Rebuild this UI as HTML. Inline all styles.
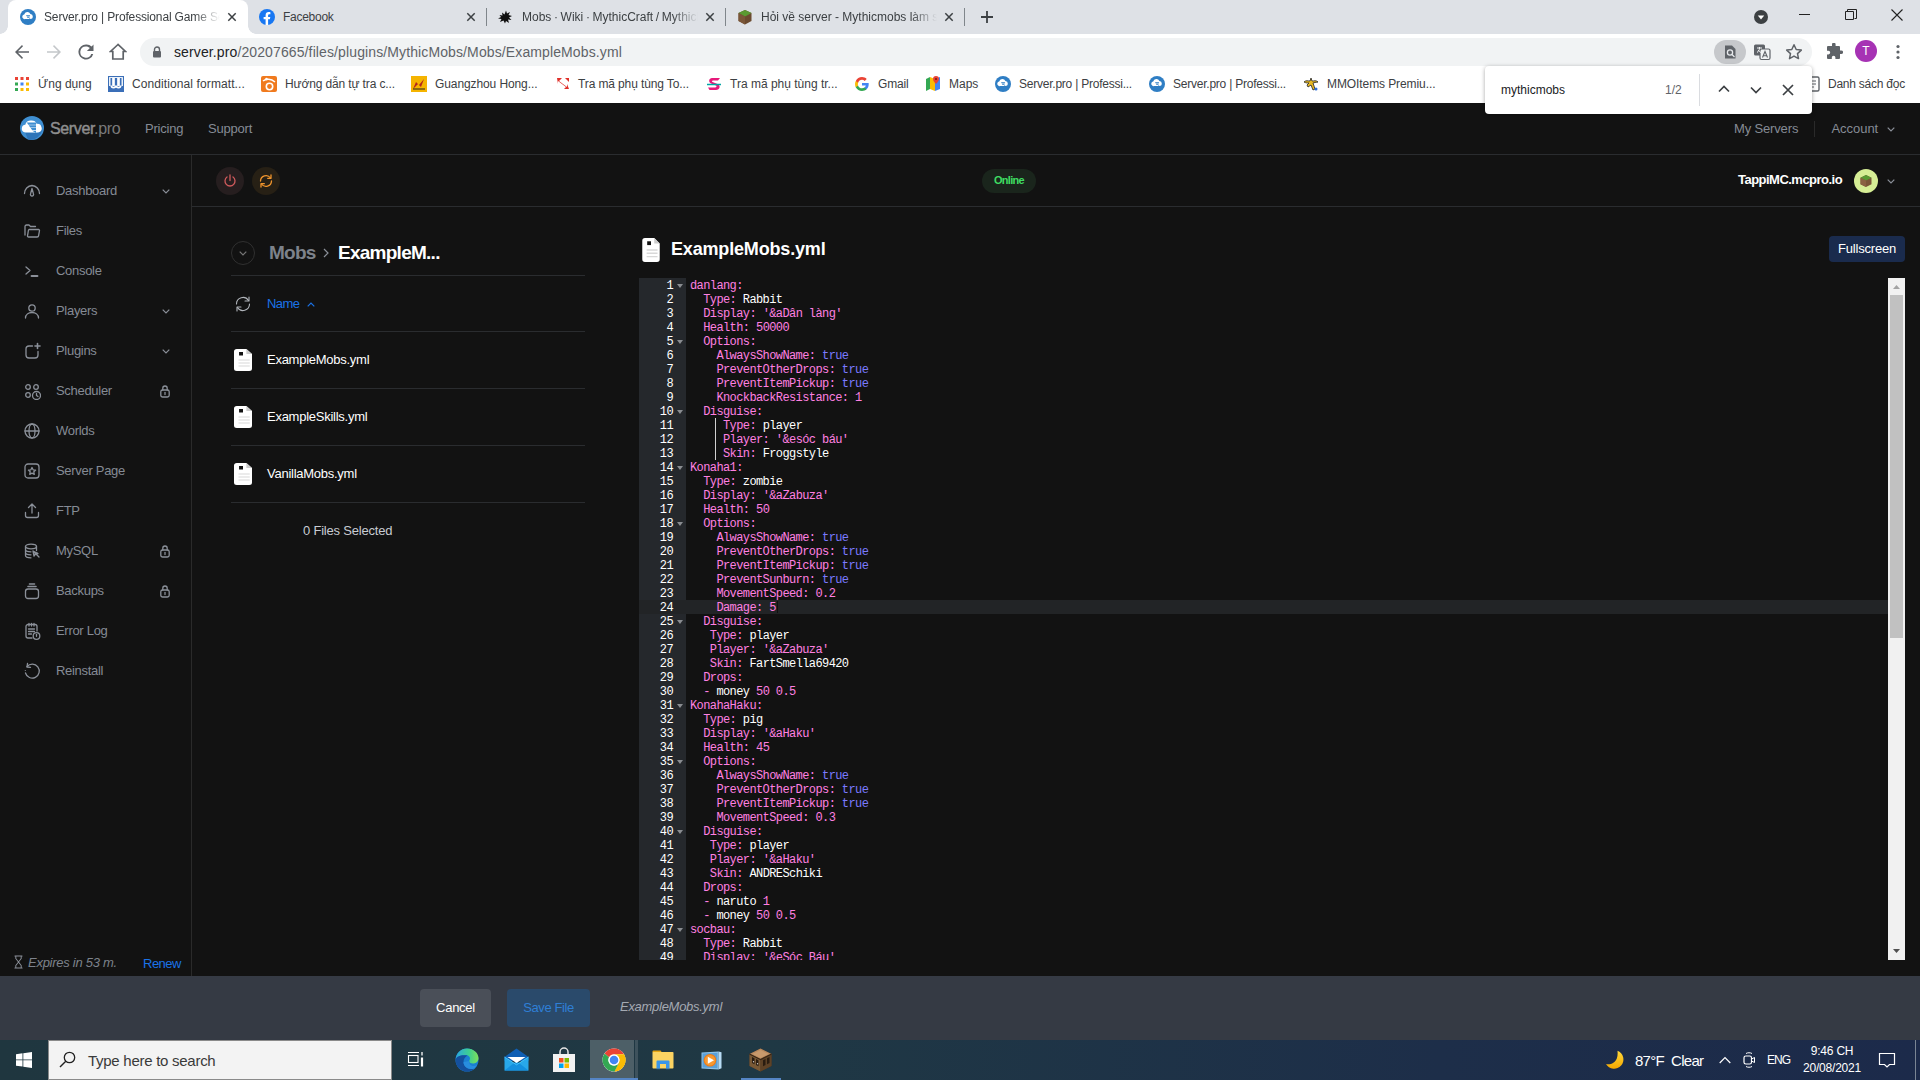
<!DOCTYPE html>
<html><head><meta charset="utf-8">
<style>
*{box-sizing:border-box;margin:0;padding:0}
html,body{width:1920px;height:1080px;overflow:hidden;background:#121212;font-family:"Liberation Sans",sans-serif;}
.abs{position:absolute}
#tabstrip{position:absolute;left:0;top:0;width:1920px;height:34px;background:#dee1e6}
#toolbar{position:absolute;left:0;top:34px;width:1920px;height:34px;background:#fff}
#bookmarks{position:absolute;left:0;top:68px;width:1920px;height:35px;background:#fff}
.tabtxt{position:absolute;top:9px;font-size:12px;color:#3c4043;white-space:nowrap;overflow:hidden;height:16px;line-height:16px}
.bm{position:absolute;top:76px;font-size:12px;color:#3c4043;white-space:nowrap;line-height:16px}
#page{position:absolute;left:0;top:103px;width:1920px;height:873px;background:#121212}
.nav{position:absolute;letter-spacing:-.2px;font-size:13px;color:#858b95;white-space:nowrap;line-height:16px}
.side{position:absolute;left:56px;margin-top:1px;letter-spacing:-.3px;font-size:13px;color:#858b95;white-space:nowrap;line-height:16px}
.hl{position:absolute;height:1px;background:#2a2c2f}
.fname{position:absolute;left:267px;letter-spacing:-.26px;font-size:13px;color:#fff;white-space:nowrap;line-height:16px}
#bottombar{position:absolute;left:0;top:976px;width:1920px;height:64px;background:#353a44}
#taskbar{position:absolute;left:0;top:1040px;width:1920px;height:40px;background:linear-gradient(90deg,#1f363f 0%,#1f3844 40%,#1d2e49 75%,#1c2a4a 100%)}
/* editor */
#editor{position:absolute;left:639px;top:278px;width:1249px;height:682px;background:#121212;overflow:hidden}
#gutter{position:absolute;left:0;top:0;width:47px;height:682px;background:#25282c}
.ln{position:absolute;left:0;width:1249px;height:14px;font-family:"Liberation Mono",monospace;font-size:12px;letter-spacing:-0.6px;line-height:14px;white-space:pre;color:#fff;margin-top:1px}
.ln .n{position:absolute;left:0;width:34px;text-align:right;color:#fff}
.ln .c{position:absolute;left:51px}
.k{color:#ff80e1}.b{color:#7a7aff}.w{color:#fff}
</style></head><body>
<!--CHROME-->
<div id="tabstrip">
<div class="abs" style="left:8px;top:0;width:240px;height:34px;background:#fff;border-radius:8px 8px 0 0"></div>
<div class="abs" style="left:0;top:26px;width:8px;height:8px;background:radial-gradient(circle at 0 0,#dee1e6 7.5px,#fff 8px)"></div>
<div class="abs" style="left:248px;top:26px;width:8px;height:8px;background:radial-gradient(circle at 100% 0,#dee1e6 7.5px,#fff 8px)"></div>
<!-- tab1 favicon -->
<svg class="abs" style="left:20px;top:9px" width="16" height="16" viewBox="0 0 16 16"><circle cx="8" cy="8" r="8" fill="#2f7ec4"/><path d="M3.2 9.6a2.2 2.2 0 0 1 1-4 3.3 3.3 0 0 1 6.2-.6 2.6 2.6 0 0 1 2.4 2.6 2.5 2.5 0 0 1-2.5 2.5H5a2 2 0 0 1-1.8-.5z" fill="#fff"/><path d="M6 6.2h4.2l-.5 1H6.6zm.8 1.5h3l-.5 1H7.4zm2.3 1.6l.9-.4.2 1.3z" fill="#2f7ec4"/></svg>
<div class="tabtxt" style="left:44px;width:176px;-webkit-mask-image:linear-gradient(90deg,#000 150px,transparent 176px);letter-spacing:-.15px">Server.pro | Professional Game Server</div>
<svg class="abs" style="left:227px;top:12px" width="10" height="10" viewBox="0 0 10 10"><path d="M1.3 1.3l7.4 7.4M8.7 1.3L1.3 8.7" stroke="#3c4043" stroke-width="1.5"/></svg>
<!-- tab2 -->
<svg class="abs" style="left:259px;top:9px" width="16" height="16" viewBox="0 0 16 16"><circle cx="8" cy="8" r="8" fill="#1877f2"/><path d="M10.9 10.3l.4-2.3H9.1V6.5c0-.6.3-1.2 1.3-1.2h1V3.3s-.9-.2-1.8-.2c-1.800 0-3 1.100-3 3.100V8H4.600v2.300h2V16h2.500v-5.700z" fill="#fff"/></svg>
<div class="tabtxt" style="left:283px;width:170px;letter-spacing:-.27px">Facebook</div>
<svg class="abs" style="left:466px;top:12px" width="10" height="10" viewBox="0 0 10 10"><path d="M1.3 1.3l7.4 7.4M8.7 1.3L1.3 8.7" stroke="#3c4043" stroke-width="1.5"/></svg>
<div class="abs" style="left:486px;top:8px;width:1px;height:18px;background:#80868b"></div>
<!-- tab3 -->
<svg class="abs" style="left:497px;top:9px" width="16" height="16" viewBox="0 0 16 16"><path d="M1 9.500l3-1.500L2.500 6l3 .5L5 3.500l2.500 2L9 1.500l1 3 3-1.500-1.500 3 3.500 1-3 1.500 2.500 2.500-3.500-.5 1 3.500-3-2-1 2.500-1.500-3-3.500 1.500 1.500-3z" fill="#111"/></svg>
<div class="tabtxt" style="left:522px;width:176px;-webkit-mask-image:linear-gradient(90deg,#000 150px,transparent 176px);letter-spacing:0;word-spacing:-.7px">Mobs · Wiki · MythicCraft / MythicMobs</div>
<svg class="abs" style="left:705px;top:12px" width="10" height="10" viewBox="0 0 10 10"><path d="M1.3 1.3l7.4 7.4M8.7 1.3L1.3 8.7" stroke="#3c4043" stroke-width="1.5"/></svg>
<div class="abs" style="left:725px;top:8px;width:1px;height:18px;background:#80868b"></div>
<!-- tab4 -->
<svg class="abs" style="left:737px;top:9px" width="16" height="16" viewBox="0 0 16 16"><path d="M8 1l6.500 3v8L8 15.500 1.500 12V4z" fill="#6b4a2f"/><path d="M8 1l6.500 3L8 7.500 1.500 4z" fill="#5a9a32"/><path d="M8 7.500V15.500L1.500 12V4z" fill="#7a5638"/></svg>
<div class="tabtxt" style="left:761px;width:176px;-webkit-mask-image:linear-gradient(90deg,#000 150px,transparent 176px)">Hỏi về server - Mythicmobs làm sao</div>
<svg class="abs" style="left:944px;top:12px" width="10" height="10" viewBox="0 0 10 10"><path d="M1.3 1.3l7.4 7.4M8.7 1.3L1.300 8.700" stroke="#3c4043" stroke-width="1.5"/></svg>
<div class="abs" style="left:964px;top:8px;width:1px;height:18px;background:#80868b"></div>
<svg class="abs" style="left:980px;top:10px" width="14" height="14" viewBox="0 0 14 14"><path d="M7 1v12M1 7h12" stroke="#3c4043" stroke-width="1.800"/></svg>
<!-- window controls -->
<svg class="abs" style="left:1754px;top:10px" width="14" height="14" viewBox="0 0 14 14"><circle cx="7" cy="7" r="7" fill="#3c4043"/><path d="M3.800 5.500h6.400L7 9.500z" fill="#fff"/></svg>
<div class="abs" style="left:1799px;top:14px;width:11px;height:1px;background:#222"></div>
<svg class="abs" style="left:1845px;top:9px" width="12" height="12" viewBox="0 0 12 12"><path d="M.5 2.500h8v8h-8zM2.500 2.500v-2h9v9h-2" fill="none" stroke="#222" stroke-width="1"/></svg>
<svg class="abs" style="left:1891px;top:9px" width="12" height="12" viewBox="0 0 12 12"><path d="M.5.5l11 11M11.500.5l-11 11" stroke="#222" stroke-width="1.100"/></svg>
</div>
<div id="toolbar">
<svg class="abs" style="left:14px;top:10px" width="16" height="16" viewBox="0 0 16 16"><path d="M15 7.200H4l5-5L8 1 1 8l7 7 1-1.200-5-5h11z" fill="#5f6368"/></svg>
<svg class="abs" style="left:46px;top:10px" width="16" height="16" viewBox="0 0 16 16"><path d="M1 7.200h11l-5-5L8 1l7 7-7 7-1-1.200 5-5H1z" fill="#c4c7ca"/></svg>
<svg class="abs" style="left:78px;top:10px" width="16" height="16" viewBox="0 0 16 16"><path d="M13.600 2.400A7.500 7.500 0 0 0 8 .5a7.500 7.500 0 1 0 7.200 9.400h-2A5.600 5.600 0 1 1 8 2.400c1.500 0 2.900.7 3.900 1.700L8.900 7h6.600V.5z" fill="#5f6368"/></svg>
<svg class="abs" style="left:109px;top:9px" width="18" height="17" viewBox="0 0 18 17"><path d="M9 1.500L1.500 8.500h2.300V16h10.400V8.500h2.300z" fill="none" stroke="#5f6368" stroke-width="1.700" stroke-linejoin="miter"/></svg>
<div class="abs" style="left:140px;top:4px;width:1672px;height:28px;border-radius:14px;background:#f1f3f4"></div>
<svg class="abs" style="left:152px;top:12px" width="10" height="12" viewBox="0 0 10 12"><path d="M2.500 5V3.500a2.500 2.500 0 0 1 5 0V5" fill="none" stroke="#5f6368" stroke-width="1.400"/><rect x="1" y="5" width="8" height="6.500" rx="1" fill="#5f6368"/></svg>
<div class="abs" style="left:174px;top:9px;font-size:14px;line-height:18px;color:#5f6368;white-space:nowrap;letter-spacing:.115px"><span style="color:#202124">server.pro</span>/20207665/files/plugins/MythicMobs/Mobs/ExampleMobs.yml</div>
<div class="abs" style="left:1714px;top:6px;width:32px;height:24px;border-radius:12px;background:#c6c8cb"></div>
<svg class="abs" style="left:1722px;top:10px" width="16" height="16" viewBox="0 0 16 16"><path d="M3 1.500h7l3.500 3.500v9.500H3z" fill="#5f6368"/><circle cx="8" cy="8.500" r="2.600" fill="none" stroke="#e8eaed" stroke-width="1.300"/><path d="M10 10.500l2.500 2.500" stroke="#e8eaed" stroke-width="1.300"/></svg>
<svg class="abs" style="left:1753px;top:9px" width="18" height="18" viewBox="0 0 18 18"><rect x="1" y="1.500" width="11" height="11" rx="1.500" fill="#5f6368"/><rect x="7" y="6" width="10" height="10.500" rx="1.500" fill="#f1f3f4" stroke="#5f6368" stroke-width="1.200"/><path d="M4 5h5M6.500 4v1c0 2-1 3.500-2.500 4.500M5 7c.800 1.200 1.800 2 3 2.500" stroke="#f1f3f4" stroke-width="1" fill="none"/><path d="M9.500 14.500l2.500-6 2.500 6M10.300 12.800h3.400" stroke="#5f6368" stroke-width="1.100" fill="none"/></svg>
<svg class="abs" style="left:1785px;top:9px" width="18" height="18" viewBox="0 0 18 18"><path d="M9 1.800l2.200 4.700 5.100.6-3.800 3.500 1 5L9 13.100l-4.500 2.500 1-5L1.700 7.100l5.100-.6z" fill="none" stroke="#5f6368" stroke-width="1.500" stroke-linejoin="round"/></svg>
<svg class="abs" style="left:1825px;top:9px" width="18" height="18" viewBox="0 0 18 18"><path d="M7 1.500a1.800 1.800 0 0 1 3.600 0V3H14a1 1 0 0 1 1 1v3.400h1.300a1.800 1.800 0 0 1 0 3.600H15v4a1 1 0 0 1-1 1h-3.600v-1.400a1.800 1.800 0 0 0-3.600 0V16H3a1 1 0 0 1-1-1v-3.600h1.400a1.800 1.800 0 0 0 0-3.600H2V4a1 1 0 0 1 1-1h4z" fill="#5f6368"/></svg>
<div class="abs" style="left:1855px;top:6px;width:22px;height:22px;border-radius:11px;background:#a632b4;color:#fff;font-size:12px;line-height:22px;text-align:center">T</div>
<svg class="abs" style="left:1896px;top:10px" width="4" height="16" viewBox="0 0 4 16"><circle cx="2" cy="2.500" r="1.600" fill="#5f6368"/><circle cx="2" cy="8" r="1.600" fill="#5f6368"/><circle cx="2" cy="13.500" r="1.600" fill="#5f6368"/></svg>
</div>
<div id="bookmarks">
<svg class="abs" style="left:15px;top:9px" width="14" height="14" viewBox="0 0 14 14"><g><rect x="0" y="0" width="3" height="3" fill="#ea4335"/><rect x="5.500" y="0" width="3" height="3" fill="#ea4335"/><rect x="11" y="0" width="3" height="3" fill="#ea4335"/><rect x="0" y="5.500" width="3" height="3" fill="#34a853"/><rect x="5.500" y="5.500" width="3" height="3" fill="#4285f4"/><rect x="11" y="5.500" width="3" height="3" fill="#fbbc04"/><rect x="0" y="11" width="3" height="3" fill="#34a853"/><rect x="5.500" y="11" width="3" height="3" fill="#fbbc04"/><rect x="11" y="11" width="3" height="3" fill="#fbbc04"/></g></svg>
<svg class="abs" style="left:108px;top:8px" width="16" height="16" viewBox="0 0 16 16"><rect x=".5" y=".5" width="15" height="15" fill="#fff" stroke="#3b6fb8" stroke-width="1.200"/><rect x="1" y="10" width="14" height="5.500" fill="#3b6fb8"/><path d="M3.300 2v7.500a2.200 2.200 0 0 0 4.400 0V2M8.300 2v7.500a2.200 2.200 0 0 0 4.400 0V2" fill="none" stroke="#3b6fb8" stroke-width="1.700"/><path d="M3.300 9.500a2.200 2.200 0 0 0 4.400 0M8.300 9.500a2.200 2.200 0 0 0 4.400 0" fill="none" stroke="#fff" stroke-width="1.700"/></svg>
<svg class="abs" style="left:261px;top:8px" width="16" height="16" viewBox="0 0 16 16"><rect width="16" height="16" rx="2" fill="#f07a1e"/><circle cx="8.500" cy="10.500" r="3.200" fill="none" stroke="#fff" stroke-width="1.600"/><path d="M2 5c3-2.500 8-2.500 12 1" stroke="#fff" stroke-width="1.500" fill="none"/><circle cx="5.500" cy="3" r="1.300" fill="#fff"/></svg>
<svg class="abs" style="left:411px;top:8px" width="16" height="16" viewBox="0 0 16 16"><rect width="16" height="16" fill="#f5b400"/><path d="M2 13l3-7 3 3 5-6-3 8-3-3z" fill="#b3261e"/><path d="M2 13h12" stroke="#222" stroke-width="1"/></svg>
<svg class="abs" style="left:555px;top:8px" width="16" height="16" viewBox="0 0 16 16"><path d="M2 2h5l-3 3 8 6V8l2 5H9l2-2-8-6v3z" fill="#e0302a"/><path d="M10 2h4v4z" fill="#e0302a"/></svg>
<svg class="abs" style="left:706px;top:8px" width="16" height="16" viewBox="0 0 16 16"><path d="M14 2H6C3 2 2 6 5 7.500l5 2c1 .5.500 2-1 2H2l1.500 2.500H10c4 0 5-4.500 1.500-6l-5-2c-1-.5-.500-1.500.5-1.500H12z" fill="#e6197a"/><path d="M1 8.500h14" stroke="#00a5a5" stroke-width="1.500"/></svg>
<svg class="abs" style="left:855px;top:9px" width="14" height="14" viewBox="0 0 14 14"><path d="M13.700 7.200c0-.5 0-.9-.1-1.300H7v2.600h3.800c-.2.900-.7 1.600-1.400 2.100v1.700h2.200c1.300-1.200 2.100-3 2.100-5.100z" fill="#4285f4"/><path d="M7 14c1.900 0 3.500-.6 4.600-1.700l-2.200-1.700c-.6.400-1.400.7-2.400.7-1.800 0-3.400-1.200-3.900-2.900H.8v1.800C2 12.500 4.300 14 7 14z" fill="#34a853"/><path d="M3.100 8.400a4.200 4.200 0 0 1 0-2.700V3.900H.8a7 7 0 0 0 0 6.300z" fill="#fbbc05"/><path d="M7 2.800c1 0 2 .4 2.700 1.100l2-2C10.500.7 8.900 0 7 0 4.300 0 2 1.500.8 3.900l2.300 1.800C3.600 4 5.200 2.800 7 2.800z" fill="#ea4335"/></svg>
<svg class="abs" style="left:925px;top:8px" width="16" height="16" viewBox="0 0 16 16"><path d="M1 3l4-2v12l-4 2z" fill="#34a853"/><path d="M5 1l5 2v12l-5-2z" fill="#fbbc04"/><path d="M10 3l5-2v12l-5 2z" fill="#4285f4"/><path d="M11 0a3 3 0 0 1 3 3c0 2-3 5-3 5S8 5 8 3a3 3 0 0 1 3-3z" fill="#ea4335"/><circle cx="11" cy="3" r="1.100" fill="#7b1a12"/></svg>
<svg class="abs" style="left:995px;top:8px" width="16" height="16" viewBox="0 0 16 16"><circle cx="8" cy="8" r="8" fill="#2f7ec4"/><path d="M3.200 9.600a2.200 2.200 0 0 1 1-4 3.300 3.300 0 0 1 6.200-.6 2.600 2.600 0 0 1 2.400 2.600 2.500 2.500 0 0 1-2.500 2.500H5a2 2 0 0 1-1.800-.5z" fill="#fff"/><path d="M6 6.200h4.200l-.5 1H6.600zm.8 1.500h3l-.5 1H7.400zm2.300 1.600l.9-.4.2 1.300z" fill="#2f7ec4"/></svg><svg class="abs" style="left:1149px;top:8px" width="16" height="16" viewBox="0 0 16 16"><circle cx="8" cy="8" r="8" fill="#2f7ec4"/><path d="M3.200 9.600a2.200 2.200 0 0 1 1-4 3.300 3.300 0 0 1 6.200-.6 2.600 2.600 0 0 1 2.400 2.600 2.500 2.500 0 0 1-2.500 2.500H5a2 2 0 0 1-1.800-.5z" fill="#fff"/><path d="M6 6.200h4.200l-.5 1H6.600zm.8 1.500h3l-.5 1H7.400zm2.300 1.600l.9-.4.2 1.300z" fill="#2f7ec4"/></svg>
<svg class="abs" style="left:1303px;top:8px" width="16" height="16" viewBox="0 0 16 16"><path d="M1 6c2-2 4-1 6-1l1-3 1 3c2 0 4-1 6 1-2 .5-4 .5-5 1l2 6-2 1-2-5-3 2-1-2 2-2c-2 0-3 0-5-1z" fill="#e8b923" stroke="#222" stroke-width=".8"/><circle cx="13" cy="13" r="1.500" fill="#2a6cd6"/></svg>
</div>
<div class="bm" style="left:38px">Ứng dụng</div>
<div class="bm" style="left:132px;letter-spacing:0.1px">Conditional formatt...</div>
<div class="bm" style="left:285px;letter-spacing:-0.13px">Hướng dẫn tự tra c...</div>
<div class="bm" style="left:435px;letter-spacing:-0.1px">Guangzhou Hong...</div>
<div class="bm" style="left:578px;letter-spacing:-0.12px">Tra mã phụ tùng To...</div>
<div class="bm" style="left:730px">Tra mã phụ tùng tr...</div>
<div class="bm" style="left:878px;letter-spacing:-0.15px">Gmail</div>
<div class="bm" style="left:949px">Maps</div>
<div class="bm" style="left:1019px;letter-spacing:-.23px">Server.pro | Professi...</div>
<div class="bm" style="left:1173px;letter-spacing:-.23px">Server.pro | Professi...</div>
<div class="bm" style="left:1327px;letter-spacing:-0.09px">MMOItems Premiu...</div>
<svg class="abs" style="left:1806px;top:76px" width="14" height="16" viewBox="0 0 14 16"><rect x="1" y="1" width="12" height="14" rx="1.500" fill="none" stroke="#5f6368" stroke-width="1.400"/><path d="M4 5h6M4 8h6M4 11h4" stroke="#5f6368" stroke-width="1.200"/></svg>
<div class="bm" style="left:1828px;letter-spacing:-0.24px">Danh sách đọc</div>
<!--PAGE-->
<div id="page">
<!-- top nav -->
<svg class="abs" style="left:20px;top:13px" width="24" height="24" viewBox="0 0 24 24"><circle cx="12" cy="12" r="12" fill="#3f8fd2"/><path d="M5 16l12 1 5-8a12 12 0 0 1-14 14.500z" fill="#2d74b8"/><path d="M4.500 16.300a3.900 3.900 0 0 1 .8-7.600 5.300 5.300 0 0 1 6.200-4.200 5.600 5.600 0 0 1 5.300 3.400 4.400 4.400 0 0 1 2.700 8.200 3 3 0 0 1-1.400.3H6a3 3 0 0 1-1.500-.1z" fill="#fff"/><path d="M6.800 6.500h9.200v2.200H8.300zm1.900 2.800h7.300v2.200h-5.800zm2 2.800h5.300v2.200h-3.800zm2 2.800l3.300 0v2z" fill="#3f8fd2"/></svg>
<div class="abs" style="left:50px;top:15px;font-size:16px;line-height:22px;color:#8e8e8e;white-space:nowrap;letter-spacing:-.36px"><span style="-webkit-text-stroke:.45px #8e8e8e">Server</span><span style="color:#7a7a7a">.pro</span></div>
<div class="nav" style="left:145px;top:18px">Pricing</div>
<div class="nav" style="left:208px;top:18px">Support</div>
<div class="nav" style="left:1734px;top:18px;letter-spacing:-.15px">My Servers</div>
<div class="abs" style="left:1814px;top:18px;width:1px;height:16px;background:#2a2a2a"></div>
<div class="nav" style="left:1831.500px;top:18px;letter-spacing:-.05px">Account</div>
<svg class="abs" style="left:1887px;top:24px" width="8" height="5" viewBox="0 0 8 5"><path d="M.7.7L4 4 7.300.7" stroke="#8b9099" stroke-width="1.200" fill="none"/></svg>
<div class="hl" style="left:0;top:51px;width:1920px"></div>
<div class="abs" style="left:191px;top:52px;width:1px;height:821px;background:#2a2a2a"></div>
<!-- sidebar -->
<svg class="abs" style="left:23px;top:79px" width="18" height="18" viewBox="0 0 18 18"><path d="M1.500 11.500A8 8 0 0 1 9 3.500a8 8 0 0 1 7.500 8" stroke="#8b9099" fill="none" stroke-width="1.300" stroke-linecap="round" stroke-linejoin="round"/><path d="M9 6.500l-1.500 5.500a1.600 1.600 0 1 0 3 0z" stroke="#8b9099" fill="none" stroke-width="1.300" stroke-linecap="round" stroke-linejoin="round"/></svg><div class="side" style="top:79px">Dashboard</div><svg class="abs" style="left:162px;top:86px" width="8" height="5" viewBox="0 0 8 5"><path d="M.7.7L4 4 7.300.7" stroke="#8b9099" stroke-width="1.200" fill="none"/></svg><svg class="abs" style="left:23px;top:119px" width="18" height="18" viewBox="0 0 18 18"><path d="M2 13V4.500a1.500 1.500 0 0 1 1.500-1.500H6l1.500 1.500h5" stroke="#8b9099" fill="none" stroke-width="1.300" stroke-linecap="round" stroke-linejoin="round"/><path d="M6 7.500h9.500a1 1 0 0 1 1 1.200l-.9 5a1.500 1.500 0 0 1-1.500 1.300H5.500a1 1 0 0 1-1-1.200l.9-5.300a1.200 1.200 0 0 1 .6-1z" stroke="#8b9099" fill="none" stroke-width="1.300" stroke-linecap="round" stroke-linejoin="round"/></svg><div class="side" style="top:119px">Files</div><svg class="abs" style="left:23px;top:159px" width="18" height="18" viewBox="0 0 18 18"><path d="M3 5l4 3.500L3 12" stroke="#8b9099" fill="none" stroke-width="1.300" stroke-linecap="round" stroke-linejoin="round"/><path d="M8.500 14h6" stroke="#8b9099" fill="none" stroke-width="1.300" stroke-linecap="round" stroke-linejoin="round" style="stroke-width:1.800"/></svg><div class="side" style="top:159px">Console</div><svg class="abs" style="left:23px;top:199px" width="18" height="18" viewBox="0 0 18 18"><circle cx="9" cy="6" r="3.200" stroke="#8b9099" fill="none" stroke-width="1.300" stroke-linecap="round" stroke-linejoin="round"/><path d="M2.500 16c0-3.500 3-5.500 6.500-5.500s6.500 2 6.500 5.500" stroke="#8b9099" fill="none" stroke-width="1.300" stroke-linecap="round" stroke-linejoin="round"/></svg><div class="side" style="top:199px">Players</div><svg class="abs" style="left:162px;top:206px" width="8" height="5" viewBox="0 0 8 5"><path d="M.7.7L4 4 7.300.7" stroke="#8b9099" stroke-width="1.200" fill="none"/></svg><svg class="abs" style="left:23px;top:239px" width="18" height="18" viewBox="0 0 18 18"><path d="M9.500 4H6a3 3 0 0 0-3 3v6a3 3 0 0 0 3 3h6a3 3 0 0 0 3-3V9.500" stroke="#8b9099" fill="none" stroke-width="1.300" stroke-linecap="round" stroke-linejoin="round"/><path d="M14.500 1.500v5M12 4h5" stroke="#8b9099" fill="none" stroke-width="1.300" stroke-linecap="round" stroke-linejoin="round" style="stroke-width:1.600"/></svg><div class="side" style="top:239px">Plugins</div><svg class="abs" style="left:162px;top:246px" width="8" height="5" viewBox="0 0 8 5"><path d="M.7.7L4 4 7.300.7" stroke="#8b9099" stroke-width="1.200" fill="none"/></svg><svg class="abs" style="left:23px;top:279px" width="18" height="18" viewBox="0 0 18 18"><circle cx="5" cy="5" r="2.300" stroke="#8b9099" fill="none" stroke-width="1.300" stroke-linecap="round" stroke-linejoin="round"/><circle cx="13" cy="5" r="2.300" stroke="#8b9099" fill="none" stroke-width="1.300" stroke-linecap="round" stroke-linejoin="round"/><circle cx="5" cy="13" r="2.300" stroke="#8b9099" fill="none" stroke-width="1.300" stroke-linecap="round" stroke-linejoin="round"/><circle cx="13.500" cy="13.500" r="4" stroke="#8b9099" fill="none" stroke-width="1.300" stroke-linecap="round" stroke-linejoin="round"/><path d="M13.500 11.500v2l1.500 1" stroke="#8b9099" fill="none" stroke-width="1.300" stroke-linecap="round" stroke-linejoin="round"/></svg><div class="side" style="top:279px">Scheduler</div><svg class="abs" style="left:160px;top:282px" width="10" height="13" viewBox="0 0 10 13"><path d="M2.800 5V3.200a2.200 2.200 0 0 1 4.400 0V5" stroke="#8b9099" fill="none" stroke-width="1.300" stroke-linecap="round" stroke-linejoin="round"/><rect x=".8" y="5" width="8.400" height="7" rx="1.800" stroke="#8b9099" fill="none" stroke-width="1.300" stroke-linecap="round" stroke-linejoin="round"/><path d="M5 7.500v2" stroke="#8b9099" fill="none" stroke-width="1.300" stroke-linecap="round" stroke-linejoin="round"/></svg><svg class="abs" style="left:23px;top:319px" width="18" height="18" viewBox="0 0 18 18"><circle cx="9" cy="9" r="7" stroke="#8b9099" fill="none" stroke-width="1.300" stroke-linecap="round" stroke-linejoin="round"/><ellipse cx="9" cy="9" rx="3" ry="7" stroke="#8b9099" fill="none" stroke-width="1.300" stroke-linecap="round" stroke-linejoin="round"/><path d="M2 9h14" stroke="#8b9099" fill="none" stroke-width="1.300" stroke-linecap="round" stroke-linejoin="round"/></svg><div class="side" style="top:319px">Worlds</div><svg class="abs" style="left:23px;top:359px" width="18" height="18" viewBox="0 0 18 18"><rect x="2" y="2" width="14" height="14" rx="3" stroke="#8b9099" fill="none" stroke-width="1.300" stroke-linecap="round" stroke-linejoin="round"/><path d="M9 5.500l1.100 2.300 2.500.3-1.800 1.700.5 2.500L9 11.100l-2.300 1.200.5-2.500-1.800-1.700 2.500-.3z" stroke="#8b9099" fill="none" stroke-width="1.300" stroke-linecap="round" stroke-linejoin="round"/></svg><div class="side" style="top:359px">Server Page</div><svg class="abs" style="left:23px;top:399px" width="18" height="18" viewBox="0 0 18 18"><path d="M9 11V2.500M5.500 5.500L9 2l3.500 3.500" stroke="#8b9099" fill="none" stroke-width="1.300" stroke-linecap="round" stroke-linejoin="round"/><path d="M2.500 10.500v3a2 2 0 0 0 2 2h9a2 2 0 0 0 2-2v-3" stroke="#8b9099" fill="none" stroke-width="1.300" stroke-linecap="round" stroke-linejoin="round"/></svg><div class="side" style="top:399px">FTP</div><svg class="abs" style="left:23px;top:439px" width="18" height="18" viewBox="0 0 18 18"><ellipse cx="8" cy="4.500" rx="5.500" ry="2.300" stroke="#8b9099" fill="none" stroke-width="1.300" stroke-linecap="round" stroke-linejoin="round"/><path d="M2.500 4.500v9c0 1.300 2.500 2.300 5.500 2.300M13.500 4.500v4M2.500 7.500c0 1.300 2.500 2.300 5.500 2.300M2.500 10.500c0 1.300 2.500 2.300 5.500 2.300" stroke="#8b9099" fill="none" stroke-width="1.300" stroke-linecap="round" stroke-linejoin="round"/><path d="M10 9l6 6M10 9l1 5 1.500-2 2.500-.5z" stroke="#8b9099" fill="none" stroke-width="1.300" stroke-linecap="round" stroke-linejoin="round"/></svg><div class="side" style="top:439px">MySQL</div><svg class="abs" style="left:160px;top:442px" width="10" height="13" viewBox="0 0 10 13"><path d="M2.800 5V3.200a2.200 2.200 0 0 1 4.400 0V5" stroke="#8b9099" fill="none" stroke-width="1.300" stroke-linecap="round" stroke-linejoin="round"/><rect x=".8" y="5" width="8.400" height="7" rx="1.800" stroke="#8b9099" fill="none" stroke-width="1.300" stroke-linecap="round" stroke-linejoin="round"/><path d="M5 7.500v2" stroke="#8b9099" fill="none" stroke-width="1.300" stroke-linecap="round" stroke-linejoin="round"/></svg><svg class="abs" style="left:23px;top:479px" width="18" height="18" viewBox="0 0 18 18"><rect x="2.500" y="7" width="13" height="9.500" rx="2.500" stroke="#8b9099" fill="none" stroke-width="1.300" stroke-linecap="round" stroke-linejoin="round"/><path d="M5 4.500h8M6.500 2h5" stroke="#8b9099" fill="none" stroke-width="1.300" stroke-linecap="round" stroke-linejoin="round" style="stroke-width:1.600"/></svg><div class="side" style="top:479px">Backups</div><svg class="abs" style="left:160px;top:482px" width="10" height="13" viewBox="0 0 10 13"><path d="M2.800 5V3.200a2.200 2.200 0 0 1 4.400 0V5" stroke="#8b9099" fill="none" stroke-width="1.300" stroke-linecap="round" stroke-linejoin="round"/><rect x=".8" y="5" width="8.400" height="7" rx="1.800" stroke="#8b9099" fill="none" stroke-width="1.300" stroke-linecap="round" stroke-linejoin="round"/><path d="M5 7.500v2" stroke="#8b9099" fill="none" stroke-width="1.300" stroke-linecap="round" stroke-linejoin="round"/></svg><svg class="abs" style="left:23px;top:519px" width="18" height="18" viewBox="0 0 18 18"><path d="M9 16H5a2 2 0 0 1-2-2V4.500a2 2 0 0 1 2-2h7a2 2 0 0 1 2 2V9" stroke="#8b9099" fill="none" stroke-width="1.300" stroke-linecap="round" stroke-linejoin="round"/><path d="M6 1.500v2.500M8.500 1.500v2.500M11 1.500v2.500M5.500 7h6M5.500 9.500h6M5.500 12h3" stroke="#8b9099" fill="none" stroke-width="1.300" stroke-linecap="round" stroke-linejoin="round"/><circle cx="13.500" cy="14" r="3.300" stroke="#8b9099" fill="none" stroke-width="1.300" stroke-linecap="round" stroke-linejoin="round"/><path d="M13.500 12.500v1.800" stroke="#8b9099" fill="none" stroke-width="1.300" stroke-linecap="round" stroke-linejoin="round"/></svg><div class="side" style="top:519px">Error Log</div><svg class="abs" style="left:23px;top:559px" width="18" height="18" viewBox="0 0 18 18"><path d="M4 4.500A7 7 0 1 1 2.500 11" stroke="#8b9099" fill="none" stroke-width="1.300" stroke-linecap="round" stroke-linejoin="round"/><path d="M4.500 1.500L4 5l3.500.3" stroke="#8b9099" fill="none" stroke-width="1.300" stroke-linecap="round" stroke-linejoin="round"/><circle cx="2.300" cy="8.500" r=".6" fill="#8b9099"/></svg><div class="side" style="top:559px">Reinstall</div>
<svg class="abs" style="left:13.500px;top:852px" width="9" height="14" viewBox="0 0 10 14" preserveAspectRatio="none"><path d="M1 1h8M1 13h8M2 1v2.500L5 7 2 10.500V13M8 1v2.500L5 7l3 3.500V13" stroke="#8b9099" fill="none" stroke-width="1.300" stroke-linecap="round" stroke-linejoin="round" style="stroke-width:1.100"/></svg>
<div class="abs" style="left:28px;top:852px;font-size:13px;line-height:16px;font-style:italic;color:#7d828b;white-space:nowrap;letter-spacing:-.27px">Expires in 53 m.</div>
<div class="abs" style="left:143px;top:853px;font-size:13px;line-height:16px;color:#1a73e8;white-space:nowrap;letter-spacing:-.5px">Renew</div>
<!-- server bar -->
<div class="abs" style="left:216px;top:64px;width:28px;height:28px;border-radius:14px;background:#261e1f"></div>
<svg class="abs" style="left:223px;top:71px" width="14" height="14" viewBox="0 0 14 14"><path d="M7 1v5.500" stroke="#cf5a5c" stroke-width="1.300" fill="none" stroke-linecap="round"/><path d="M4 3A5 5 0 1 0 10 3" stroke="#cf5a5c" stroke-width="1.300" fill="none" stroke-linecap="round"/></svg>
<div class="abs" style="left:252px;top:64px;width:28px;height:28px;border-radius:14px;background:#272015"></div>
<svg class="abs" style="left:259px;top:71px" width="14" height="14" viewBox="0 0 14 14"><path d="M1.500 7A5.500 5.500 0 0 1 11.500 4M12.500 7A5.500 5.500 0 0 1 2.500 10" stroke="#f0942c" stroke-width="1.300" fill="none" stroke-linecap="round"/><path d="M12 1v3.300H8.700M2 13V9.700h3.300" stroke="#f0942c" stroke-width="1.300" fill="none" stroke-linecap="round" stroke-linejoin="round"/></svg>
<div class="abs" style="left:982px;top:66px;width:54px;height:24px;border-radius:12px;background:#1a251c;color:#3fdb62;font-size:11px;font-weight:bold;line-height:23px;text-align:center;letter-spacing:-.7px">Online</div>
<div class="abs" style="left:1738px;top:69px;font-size:13px;font-weight:bold;line-height:16px;color:#fff;white-space:nowrap;letter-spacing:-.52px">TappiMC.mcpro.io</div>
<div class="abs" style="left:1854px;top:66px;width:24px;height:24px;border-radius:12px;background:#d6ee95"></div>
<svg class="abs" style="left:1859px;top:71px" width="14" height="14" viewBox="0 0 14 14"><path d="M7 1l5.500 2.800v6.400L7 13 1.500 10.200V3.800z" fill="#7a5638"/><path d="M7 1l5.500 2.800L7 6.600 1.500 3.800z" fill="#5a9a32"/><path d="M7 6.600V13L1.500 10.200V3.800z" fill="#8a6242"/></svg>
<svg class="abs" style="left:1887px;top:76px" width="8" height="5" viewBox="0 0 8 5"><path d="M.7.7L4 4 7.300.7" stroke="#8b9099" stroke-width="1.200" fill="none"/></svg>
<div class="hl" style="left:192px;top:103px;width:1728px"></div>
<!-- files panel -->
<div class="abs" style="left:231px;top:138px;width:24px;height:24px;border-radius:12px;border:1px solid #303030"></div>
<svg class="abs" style="left:239px;top:148px" width="8" height="5" viewBox="0 0 8 5"><path d="M.7.7L4 4 7.300.7" stroke="#777" stroke-width="1.200" fill="none"/></svg>
<div class="abs" style="left:269px;top:138px;font-size:19px;font-weight:bold;line-height:24px;color:#7d828b;white-space:nowrap;letter-spacing:-.73px">Mobs</div>
<svg class="abs" style="left:323px;top:145px" width="6" height="10" viewBox="0 0 6 10"><path d="M1 1l4 4-4 4" stroke="#8b9099" stroke-width="1.200" fill="none"/></svg>
<div class="abs" style="left:338px;top:138px;font-size:19px;font-weight:bold;line-height:24px;color:#fff;white-space:nowrap;letter-spacing:-.74px">ExampleM...</div>
<div class="hl" style="left:231px;top:172px;width:354px"></div>
<svg class="abs" style="left:235px;top:193px" width="16" height="16" viewBox="0 0 16 16"><path d="M1.500 8A6.500 6.500 0 0 1 13.500 4.500M14.500 8A6.500 6.500 0 0 1 2.500 11.500" stroke="#b0b4ba" stroke-width="1.100" fill="none" stroke-linecap="round"/><path d="M14 1v4h-4M2 15v-4h4" stroke="#b0b4ba" stroke-width="1.100" fill="none" stroke-linecap="round" stroke-linejoin="round"/></svg>
<div class="abs" style="left:267px;top:193px;font-size:13px;line-height:16px;letter-spacing:-.55px;color:#1a73e8">Name</div>
<svg class="abs" style="left:307px;top:199px" width="8" height="5" viewBox="0 0 8 5"><path d="M.7 4.300L4 1l3.300 3.300" stroke="#1a73e8" stroke-width="1.200" fill="none"/></svg>
<div class="hl" style="left:231px;top:228px;width:354px"></div>
<svg class="abs" style="left:234px;top:246px" width="18" height="22" preserveAspectRatio="none" viewBox="0 0 16 22"><path d="M2.500 0h8.500l5 5v14.500a2.500 2.500 0 0 1-2.500 2.500h-11A2.500 2.500 0 0 1 0 19.500v-17A2.500 2.500 0 0 1 2.500 0z" fill="#fff"/><path d="M4.500 3h3.500v3.500H4.500z" fill="#121212"/><path d="M4 11h10M4 14h10M4 17h10" stroke="#d8d8d8" stroke-width="1.200"/><path d="M11 0v5h5z" fill="#ccc"/></svg><div class="fname" style="top:249px">ExampleMobs.yml</div>
<div class="hl" style="left:231px;top:285px;width:354px"></div>
<svg class="abs" style="left:234px;top:303px" width="18" height="22" preserveAspectRatio="none" viewBox="0 0 16 22"><path d="M2.500 0h8.500l5 5v14.500a2.500 2.500 0 0 1-2.500 2.500h-11A2.500 2.500 0 0 1 0 19.500v-17A2.500 2.500 0 0 1 2.500 0z" fill="#fff"/><path d="M4.500 3h3.500v3.500H4.500z" fill="#121212"/><path d="M4 11h10M4 14h10M4 17h10" stroke="#d8d8d8" stroke-width="1.200"/><path d="M11 0v5h5z" fill="#ccc"/></svg><div class="fname" style="top:306px">ExampleSkills.yml</div>
<div class="hl" style="left:231px;top:342px;width:354px"></div>
<svg class="abs" style="left:234px;top:360px" width="18" height="22" preserveAspectRatio="none" viewBox="0 0 16 22"><path d="M2.500 0h8.500l5 5v14.500a2.500 2.500 0 0 1-2.500 2.500h-11A2.500 2.500 0 0 1 0 19.500v-17A2.500 2.500 0 0 1 2.500 0z" fill="#fff"/><path d="M4.500 3h3.500v3.500H4.500z" fill="#121212"/><path d="M4 11h10M4 14h10M4 17h10" stroke="#d8d8d8" stroke-width="1.200"/><path d="M11 0v5h5z" fill="#ccc"/></svg><div class="fname" style="top:363px">VanillaMobs.yml</div>
<div class="hl" style="left:231px;top:399px;width:354px"></div>
<div class="abs" style="left:303px;top:420px;font-size:13px;line-height:16px;color:#c8ccd2;white-space:nowrap;letter-spacing:-.2px">0 Files Selected</div>
<!-- editor header -->
<svg class="abs" style="left:642px;top:135px" width="18" height="24" viewBox="0 0 16 22"><path d="M2.500 0h8.500l5 5v14.500a2.500 2.500 0 0 1-2.500 2.500h-11A2.500 2.500 0 0 1 0 19.500v-17A2.500 2.500 0 0 1 2.500 0z" fill="#fff"/><path d="M4.500 3h3.500v3.500H4.500z" fill="#121212"/><path d="M4 11h10M4 14h10M4 17h10" stroke="#d8d8d8" stroke-width="1.200"/><path d="M11 0v5h5z" fill="#ccc"/></svg>
<div class="abs" style="left:671px;top:135px;font-size:18px;font-weight:bold;line-height:22px;color:#fff;white-space:nowrap;letter-spacing:-.17px">ExampleMobs.yml</div>
<div class="abs" style="left:1829px;top:133px;width:76px;height:26px;border-radius:4px;background:#1a2b4d;color:#fff;font-size:13px;line-height:26px;text-align:center;letter-spacing:-.2px">Fullscreen</div>
</div>
<!-- find bar -->
<div class="abs" style="left:1485px;top:66px;width:327px;height:48px;background:#fff;border-radius:4px;box-shadow:0 1px 4px rgba(0,0,0,.35)"></div>
<div class="abs" style="left:1501px;top:82px;font-size:12px;line-height:16px;color:#202124">mythicmobs</div>
<div class="abs" style="left:1665px;top:82px;font-size:12px;line-height:16px;color:#5f6368">1/2</div>
<div class="abs" style="left:1699px;top:74px;width:1px;height:32px;background:#dadce0"></div>
<svg class="abs" style="left:1718px;top:85px" width="12" height="8" viewBox="0 0 12 8"><path d="M1 6.500l5-5 5 5" stroke="#3c4043" stroke-width="1.700" fill="none"/></svg>
<svg class="abs" style="left:1750px;top:86px" width="12" height="8" viewBox="0 0 12 8"><path d="M1 1.500l5 5 5-5" stroke="#3c4043" stroke-width="1.700" fill="none"/></svg>
<svg class="abs" style="left:1782px;top:84px" width="12" height="12" viewBox="0 0 12 12"><path d="M1 1l10 10M11 1L1 11" stroke="#3c4043" stroke-width="1.700"/></svg>
<!--EDITOR-->
<div id="editor"><div id="gutter"></div>
<div class="abs" style="left:0;top:322px;width:1249px;height:14px;background:#222426"></div>
<div class="abs" style="left:76px;top:140px;width:1px;height:42px;background:#d0d0d0"></div>
<div class="ln" style="top:0px"><span class="n">1</span><svg class="abs" style="left:38px;top:5px" width="6" height="4" viewBox="0 0 6 4"><path d="M0 0h6L3 4z" fill="#8a8d91"/></svg><span class="c"><span class="k">danlang:</span></span></div>
<div class="ln" style="top:14px"><span class="n">2</span><span class="c">  <span class="k">Type:</span> Rabbit</span></div>
<div class="ln" style="top:28px"><span class="n">3</span><span class="c">  <span class="k">Display:</span> <span class="k">&#x27;&amp;aDân làng&#x27;</span></span></div>
<div class="ln" style="top:42px"><span class="n">4</span><span class="c">  <span class="k">Health:</span> <span class="k">50000</span></span></div>
<div class="ln" style="top:56px"><span class="n">5</span><svg class="abs" style="left:38px;top:5px" width="6" height="4" viewBox="0 0 6 4"><path d="M0 0h6L3 4z" fill="#8a8d91"/></svg><span class="c">  <span class="k">Options:</span></span></div>
<div class="ln" style="top:70px"><span class="n">6</span><span class="c">    <span class="k">AlwaysShowName:</span> <span class="b">true</span></span></div>
<div class="ln" style="top:84px"><span class="n">7</span><span class="c">    <span class="k">PreventOtherDrops:</span> <span class="b">true</span></span></div>
<div class="ln" style="top:98px"><span class="n">8</span><span class="c">    <span class="k">PreventItemPickup:</span> <span class="b">true</span></span></div>
<div class="ln" style="top:112px"><span class="n">9</span><span class="c">    <span class="k">KnockbackResistance:</span> <span class="k">1</span></span></div>
<div class="ln" style="top:126px"><span class="n">10</span><svg class="abs" style="left:38px;top:5px" width="6" height="4" viewBox="0 0 6 4"><path d="M0 0h6L3 4z" fill="#8a8d91"/></svg><span class="c">  <span class="k">Disguise:</span></span></div>
<div class="ln" style="top:140px"><span class="n">11</span><span class="c">     <span class="k">Type:</span> player</span></div>
<div class="ln" style="top:154px"><span class="n">12</span><span class="c">     <span class="k">Player:</span> <span class="k">&#x27;&amp;esóc báu&#x27;</span></span></div>
<div class="ln" style="top:168px"><span class="n">13</span><span class="c">     <span class="k">Skin:</span> Froggstyle</span></div>
<div class="ln" style="top:182px"><span class="n">14</span><svg class="abs" style="left:38px;top:5px" width="6" height="4" viewBox="0 0 6 4"><path d="M0 0h6L3 4z" fill="#8a8d91"/></svg><span class="c"><span class="k">Konaha1:</span></span></div>
<div class="ln" style="top:196px"><span class="n">15</span><span class="c">  <span class="k">Type:</span> zombie</span></div>
<div class="ln" style="top:210px"><span class="n">16</span><span class="c">  <span class="k">Display:</span> <span class="k">&#x27;&amp;aZabuza&#x27;</span></span></div>
<div class="ln" style="top:224px"><span class="n">17</span><span class="c">  <span class="k">Health:</span> <span class="k">50</span></span></div>
<div class="ln" style="top:238px"><span class="n">18</span><svg class="abs" style="left:38px;top:5px" width="6" height="4" viewBox="0 0 6 4"><path d="M0 0h6L3 4z" fill="#8a8d91"/></svg><span class="c">  <span class="k">Options:</span></span></div>
<div class="ln" style="top:252px"><span class="n">19</span><span class="c">    <span class="k">AlwaysShowName:</span> <span class="b">true</span></span></div>
<div class="ln" style="top:266px"><span class="n">20</span><span class="c">    <span class="k">PreventOtherDrops:</span> <span class="b">true</span></span></div>
<div class="ln" style="top:280px"><span class="n">21</span><span class="c">    <span class="k">PreventItemPickup:</span> <span class="b">true</span></span></div>
<div class="ln" style="top:294px"><span class="n">22</span><span class="c">    <span class="k">PreventSunburn:</span> <span class="b">true</span></span></div>
<div class="ln" style="top:308px"><span class="n">23</span><span class="c">    <span class="k">MovementSpeed:</span> <span class="k">0.2</span></span></div>
<div class="ln" style="top:322px"><span class="n">24</span><span class="c">    <span class="k">Damage:</span> <span class="k">5</span></span></div>
<div class="ln" style="top:336px"><span class="n">25</span><svg class="abs" style="left:38px;top:5px" width="6" height="4" viewBox="0 0 6 4"><path d="M0 0h6L3 4z" fill="#8a8d91"/></svg><span class="c">  <span class="k">Disguise:</span></span></div>
<div class="ln" style="top:350px"><span class="n">26</span><span class="c">   <span class="k">Type:</span> player</span></div>
<div class="ln" style="top:364px"><span class="n">27</span><span class="c">   <span class="k">Player:</span> <span class="k">&#x27;&amp;aZabuza&#x27;</span></span></div>
<div class="ln" style="top:378px"><span class="n">28</span><span class="c">   <span class="k">Skin:</span> FartSmella69420</span></div>
<div class="ln" style="top:392px"><span class="n">29</span><span class="c">  <span class="k">Drops:</span></span></div>
<div class="ln" style="top:406px"><span class="n">30</span><span class="c">  <span class="k">-</span> money <span class="k">50</span> <span class="k">0.5</span></span></div>
<div class="ln" style="top:420px"><span class="n">31</span><svg class="abs" style="left:38px;top:5px" width="6" height="4" viewBox="0 0 6 4"><path d="M0 0h6L3 4z" fill="#8a8d91"/></svg><span class="c"><span class="k">KonahaHaku:</span></span></div>
<div class="ln" style="top:434px"><span class="n">32</span><span class="c">  <span class="k">Type:</span> pig</span></div>
<div class="ln" style="top:448px"><span class="n">33</span><span class="c">  <span class="k">Display:</span> <span class="k">&#x27;&amp;aHaku&#x27;</span></span></div>
<div class="ln" style="top:462px"><span class="n">34</span><span class="c">  <span class="k">Health:</span> <span class="k">45</span></span></div>
<div class="ln" style="top:476px"><span class="n">35</span><svg class="abs" style="left:38px;top:5px" width="6" height="4" viewBox="0 0 6 4"><path d="M0 0h6L3 4z" fill="#8a8d91"/></svg><span class="c">  <span class="k">Options:</span></span></div>
<div class="ln" style="top:490px"><span class="n">36</span><span class="c">    <span class="k">AlwaysShowName:</span> <span class="b">true</span></span></div>
<div class="ln" style="top:504px"><span class="n">37</span><span class="c">    <span class="k">PreventOtherDrops:</span> <span class="b">true</span></span></div>
<div class="ln" style="top:518px"><span class="n">38</span><span class="c">    <span class="k">PreventItemPickup:</span> <span class="b">true</span></span></div>
<div class="ln" style="top:532px"><span class="n">39</span><span class="c">    <span class="k">MovementSpeed:</span> <span class="k">0.3</span></span></div>
<div class="ln" style="top:546px"><span class="n">40</span><svg class="abs" style="left:38px;top:5px" width="6" height="4" viewBox="0 0 6 4"><path d="M0 0h6L3 4z" fill="#8a8d91"/></svg><span class="c">  <span class="k">Disguise:</span></span></div>
<div class="ln" style="top:560px"><span class="n">41</span><span class="c">   <span class="k">Type:</span> player</span></div>
<div class="ln" style="top:574px"><span class="n">42</span><span class="c">   <span class="k">Player:</span> <span class="k">&#x27;&amp;aHaku&#x27;</span></span></div>
<div class="ln" style="top:588px"><span class="n">43</span><span class="c">   <span class="k">Skin:</span> ANDRESchiki</span></div>
<div class="ln" style="top:602px"><span class="n">44</span><span class="c">  <span class="k">Drops:</span></span></div>
<div class="ln" style="top:616px"><span class="n">45</span><span class="c">  <span class="k">-</span> naruto <span class="k">1</span></span></div>
<div class="ln" style="top:630px"><span class="n">46</span><span class="c">  <span class="k">-</span> money <span class="k">50</span> <span class="k">0.5</span></span></div>
<div class="ln" style="top:644px"><span class="n">47</span><svg class="abs" style="left:38px;top:5px" width="6" height="4" viewBox="0 0 6 4"><path d="M0 0h6L3 4z" fill="#8a8d91"/></svg><span class="c"><span class="k">socbau:</span></span></div>
<div class="ln" style="top:658px"><span class="n">48</span><span class="c">  <span class="k">Type:</span> Rabbit</span></div>
<div class="ln" style="top:672px"><span class="n">49</span><span class="c">  <span class="k">Display:</span> <span class="k">&#x27;&amp;eSóc Báu&#x27;</span></span></div>
<div class="abs" style="left:138px;top:323px;width:1px;height:12px;background:#111"></div>
</div>
<div class="abs" style="left:1888px;top:278px;width:17px;height:682px;background:#f1f1f1"></div>
<div class="abs" style="left:1890px;top:295px;width:13px;height:343px;background:#c1c1c1"></div>
<svg class="abs" style="left:1893px;top:285px" width="7" height="4" viewBox="0 0 7 4"><path d="M0 4h7L3.500 0z" fill="#a3a3a3"/></svg>
<svg class="abs" style="left:1893px;top:949px" width="7" height="4" viewBox="0 0 7 4"><path d="M0 0h7L3.500 4z" fill="#505050"/></svg>
<!--BOTTOM-->
<div id="bottombar">
<div class="abs" style="left:420px;top:13px;width:71px;height:38px;border-radius:4px;background:#4a4f58;color:#fff;font-size:13px;line-height:38px;text-align:center;letter-spacing:-.25px">Cancel</div>
<div class="abs" style="left:507px;top:13px;width:83px;height:38px;border-radius:4px;background:#2a4a6b;color:#2f7fd6;font-size:13px;line-height:38px;text-align:center;letter-spacing:-.4px">Save File</div>
<div class="abs" style="left:620px;top:23px;font-size:13px;line-height:16px;font-style:italic;color:#a4a9b2;white-space:nowrap;letter-spacing:-.28px">ExampleMobs.yml</div>
</div>
<div id="taskbar">
<svg class="abs" style="left:16px;top:12px" width="16" height="16" viewBox="0 0 16 16"><path d="M0 2.200L6.500 1.300v6.200H0zM7.300 1.200L16 0v7.500H7.300zM0 8.300h6.500v6.300L0 13.700zM7.300 8.300H16V16l-8.700-1.200z" fill="#fff"/></svg>
<div class="abs" style="left:48px;top:0;width:344px;height:40px;background:#f3f3f3;border:1px solid #8a8a8a"></div>
<svg class="abs" style="left:59px;top:11px" width="17" height="17" viewBox="0 0 17 17"><circle cx="10.500" cy="6.500" r="5.200" fill="none" stroke="#222" stroke-width="1.300"/><path d="M6.800 10.200L1 16" stroke="#222" stroke-width="1.400"/></svg>
<div class="abs" style="left:88px;top:12px;font-size:15px;line-height:18px;color:#3a3a3a;white-space:nowrap;letter-spacing:-.27px">Type here to search</div>
<svg class="abs" style="left:407px;top:11px" width="18" height="18" viewBox="0 0 18 18"><path d="M1 1.500h11M1 14.500h11" stroke="#fff" stroke-width="1.100"/><rect x="1.500" y="4.500" width="9.500" height="7" fill="none" stroke="#fff" stroke-width="1.100"/><path d="M15 1v3.500" stroke="#fff" stroke-width="1.300"/><path d="M15 6.500v9" stroke="#fff" stroke-width="2.200"/></svg>
<!-- edge -->
<svg class="abs" style="left:455px;top:8px" width="24" height="24" viewBox="0 0 24 24"><defs><linearGradient id="eg" x1="0" y1="0" x2="1" y2="0"><stop offset="0" stop-color="#2aa7e0"/><stop offset=".6" stop-color="#3fcf8e"/><stop offset="1" stop-color="#7fe05a"/></linearGradient></defs><circle cx="12" cy="12" r="11.500" fill="#1b7fd2"/><path d="M.8 11C1.500 5 6 .5 12 .5c6.500 0 11.500 4.500 11.500 9.500 0 3.300-2.400 5.500-5.500 5.500-2.300 0-3.800-1-3.800-2.300 0-1 .8-1.400.8-2.700C15 8.500 13 7 10.500 7 6.500 7 2.500 8.500.8 11z" fill="url(#eg)"/><path d="M.6 12c0 6.500 5 11.500 11.400 11.500 3 0 5.500-1 7.500-3-5.500 1.800-11-1.300-11-6.500 0-2.800 1.500-5.300 4-6.500C6.500 6.500 1 8 .6 12z" fill="#14509e"/><path d="M8.500 14c0 4.500 4.500 8 10 6.700 1.500-.8 3-2.200 3.800-3.700-2 1.500-5.300 1.300-7-.2-1-1-1.300-2.300-.8-3.800z" fill="#2a8fe0" opacity=".9"/></svg>
<!-- mail -->
<svg class="abs" style="left:504px;top:8px" width="25" height="24" viewBox="0 0 25 24"><path d="M.5 9L12.500 .5l12 8.500v4H.5z" fill="#0f5fb4"/><path d="M.5 9l12 7.500 12-7.500v13.500H.5z" fill="#28a8ea"/><path d="M.5 22.500l12-9.500 12 9.500z" fill="#1490df"/><path d="M3.500 9l9 6 9-6z" fill="#fff"/><path d="M.5 9l12 7.800 12-7.800" fill="none" stroke="#50d0ff" stroke-width=".8"/></svg>
<!-- store -->
<svg class="abs" style="left:552px;top:7px" width="24" height="26" viewBox="0 0 24 26"><path d="M8 7V5a4 4 0 0 1 8 0v2" fill="none" stroke="#e6e6e6" stroke-width="1.500"/><rect x="1" y="7" width="22" height="18" fill="#f2f2f2"/><rect x="7" y="11" width="4.500" height="4.500" fill="#f25022"/><rect x="12.500" y="11" width="4.500" height="4.500" fill="#7fba00"/><rect x="7" y="16.500" width="4.500" height="4.500" fill="#00a4ef"/><rect x="12.500" y="16.500" width="4.500" height="4.500" fill="#ffb900"/></svg>
<!-- chrome active -->
<div class="abs" style="left:590px;top:0;width:44px;height:40px;background:#4d5f67"></div>
<div class="abs" style="left:635px;top:0;width:3px;height:40px;background:#3e525c"></div>
<div class="abs" style="left:590px;top:38px;width:48px;height:2px;background:#5585c5"></div>
<svg class="abs" style="left:602px;top:8px" width="24" height="24" viewBox="0 0 24 24"><circle cx="12" cy="12" r="11.500" fill="#fff"/><path d="M12 .5A11.500 11.500 0 0 1 22 6.300H12a5.700 5.700 0 0 0-5 2.900L2.600 5.500A11.500 11.500 0 0 1 12 .5z" fill="#ea4335"/><path d="M22 6.300a11.500 11.500 0 0 1-9.500 17.200l4.400-8.600a5.700 5.700 0 0 0 .1-5.700z" fill="#fbbc04" transform="rotate(0 12 12)"/><path d="M22 6.300H12a5.700 5.700 0 0 1 5 8.600L12.500 23.500A11.500 11.500 0 0 0 22 6.300z" fill="#fbbc04"/><path d="M2.600 5.500L7 9.200a5.700 5.700 0 0 0 9.900 5.700l-4.400 8.600A11.500 11.500 0 0 1 2.600 5.500z" fill="#34a853"/><circle cx="12" cy="12" r="5.300" fill="#fff"/><circle cx="12" cy="12" r="4.300" fill="#4285f4"/></svg>
<!-- explorer -->
<svg class="abs" style="left:652px;top:10px" width="22" height="20" viewBox="0 0 22 20"><path d="M.5 1.500a1 1 0 0 1 1-1h7l1.500 2H.5z" fill="#e6a512"/><rect x=".5" y="2" width="21" height="16.500" rx=".8" fill="#fcd462"/><path d="M4.500 18.500v-7a1 1 0 0 1 1-1h11a1 1 0 0 1 1 1v7h-3.500v-4.500h-6v4.500z" fill="#3a96e8"/><path d="M4.500 18.500h3.500v.8H4.500zM14 18.500h3.500v.8H14z" fill="#2676c4"/></svg>
<!-- media -->
<svg class="abs" style="left:701px;top:11px" width="21" height="19" viewBox="0 0 21 19"><path d="M.5 1.500l17-1v18l-17-1z" fill="#8ec3ea"/><path d="M17.500 .5l3 .8v16l-3 1.200z" fill="#b8dcf5"/><path d="M1.500 2.500l15-.8v15.600l-15-.8z" fill="#5aa0d8"/><circle cx="9" cy="9.300" r="6.300" fill="#f07c14"/><circle cx="9" cy="9.300" r="5.300" fill="#f79a32"/><path d="M6.800 5.800l6.200 3.500-6.200 3.500z" fill="#fff"/></svg>
<!-- minecraft table -->
<svg class="abs" style="left:749px;top:8px" width="23" height="24" viewBox="0 0 23 24"><path d="M11.500 .5l11 5.500v12l-11 5.500L.5 18V6z" fill="#4a3320"/><path d="M11.500 .5l11 5.500-11 5.500L.5 6z" fill="#b98a5e"/><path d="M11.500 2l8 4-8 4-8-4z" fill="#c99a6c"/><path d="M11.500 11.500v12L.5 18V6z" fill="#7a5a36"/><path d="M11.500 11.500v12l11-5.500V6z" fill="#5e4226"/><path d="M3 9l2.500 1.200v6L3 15zM7 11l2.500 1.200v6L7 17zM14 12.200l2.500-1.200v6L14 18.200zM18 10.200l2.500-1.200v6L18 16.200z" fill="#2a1c10"/><path d="M.5 6l11 5.500 11-5.500" fill="none" stroke="#3a2614" stroke-width="1.200"/><path d="M4 13.500l1 .5M8 15.500l1 .5" stroke="#ddd" stroke-width="1.200"/></svg>
<div class="abs" style="left:741px;top:38px;width:40px;height:2px;background:#5585c5"></div>
<!-- tray -->
<svg class="abs" style="left:1605px;top:10px" width="21" height="20" viewBox="0 0 21 20"><defs><linearGradient id="mg" x1="0" y1="0" x2="0" y2="1"><stop offset="0" stop-color="#ffd83a"/><stop offset="1" stop-color="#f5a800"/></linearGradient></defs><path d="M12.500 .8a9.300 9.300 0 1 1-11.500 13.200c4.500 1 9-1 10.800-5.500 1-2.600.9-5.300.7-7.700z" fill="url(#mg)"/></svg>
<div class="abs" style="left:1635px;top:12px;font-size:15px;line-height:18px;color:#fff;white-space:nowrap;letter-spacing:-.75px">87°F</div><div class="abs" style="left:1671px;top:12px;font-size:15px;line-height:18px;color:#fff;white-space:nowrap;letter-spacing:-.7px">Clear</div>
<svg class="abs" style="left:1719px;top:16px" width="12" height="8" viewBox="0 0 12 8"><path d="M.7 7L6 1.500 11.300 7" stroke="#fff" stroke-width="1.200" fill="none"/></svg>
<svg class="abs" style="left:1743px;top:11px" width="13" height="18" viewBox="0 0 13 18"><path d="M3 2.500c1.500-1 4.500-1 6 0M3 15.500c1.500 1 4.500 1 6 0" stroke="#fff" stroke-width="1" fill="none"/><rect x="1" y="5" width="7.500" height="8" rx="1.800" fill="none" stroke="#fff" stroke-width="1.200"/><path d="M8.500 8l3-1.500v5L8.500 10z" fill="none" stroke="#fff" stroke-width="1"/></svg>
<div class="abs" style="left:1767px;top:12px;font-size:12px;line-height:16px;color:#fff;white-space:nowrap;letter-spacing:-1px">ENG</div>
<div class="abs" style="left:1792px;top:3px;width:80px;text-align:center;font-size:12px;line-height:17px;color:#fff;white-space:nowrap;letter-spacing:-.2px">9:46 CH<br>20/08/2021</div>
<svg class="abs" style="left:1878px;top:12px" width="18" height="18" viewBox="0 0 18 18"><path d="M1.500 1.500h15v11h-5L9 15l-2.500-2.500h-5z" fill="none" stroke="#fff" stroke-width="1.200"/></svg>
<div class="abs" style="left:1915px;top:0;width:1px;height:40px;background:#7a8594"></div>
</div>
</body></html>
